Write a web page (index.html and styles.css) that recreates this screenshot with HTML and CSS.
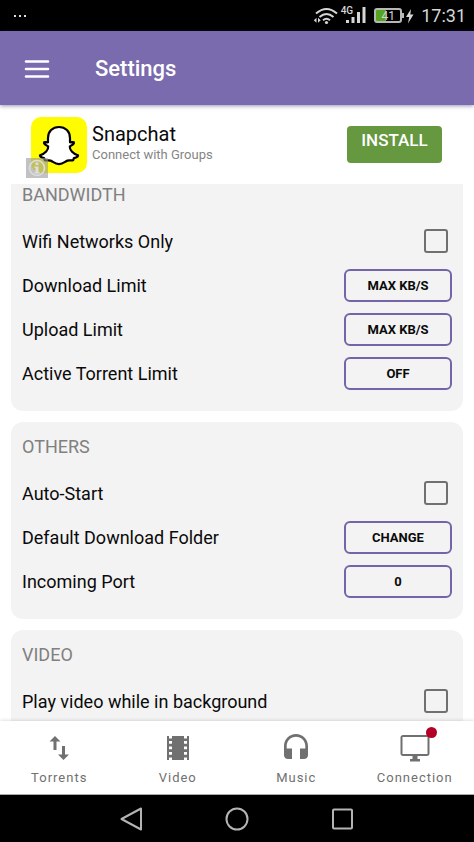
FILE: index.html
```html
<!DOCTYPE html>
<html lang="en">
<head>
<meta charset="utf-8">
<meta name="viewport" content="width=device-width, initial-scale=1">
<title>Settings</title>
<link rel="stylesheet" href="styles.css">
</head>
<body>
<div class="status">
  <svg class="dots" width="14" height="4" viewBox="0 0 14 4" fill="#ddd"><path d="M1 1h2v2H1zM6 1h2v2H6zM11 1h2v2h-2z"/></svg>
  <div class="status-right">
    <svg width="26" height="18" viewBox="0 0 26 18" fill="none" stroke="#d6d6d6" stroke-width="2">
      <path d="M3 6.500Q13.500-2.500 24 6.500M6.500 10Q13.500 4 20.500 10M10 13.200Q13.500 10.200 17 13.200"/>
      <circle cx="13.500" cy="15.500" r="1.600" fill="#d6d6d6" stroke="none"/>
      <path d="M3.500 10.800v5L.8 13.300zM5 10.800v5l2.700-2.500z" fill="#d6d6d6" stroke="none"/>
    </svg>
    <div class="signal">
      <span class="net">4G</span>
      <svg width="20" height="17" viewBox="0 0 20 17" fill="#d6d6d6"><path d="M0 13h3v3H0zM5.500 10h3v6h-3zM11 5h3v11h-3zM16.500 0h3v16h-3z"/></svg>
    </div>
    <span class="battery"><span class="level">41</span></span>
    <svg width="8" height="16" viewBox="0 0 8 16" fill="#d6d6d6"><path d="M5 1 0 9h3.200L2 15.500 7.500 6.500H4.300z"/></svg>
    <span class="clock">17:31</span>
  </div>
</div>

<header class="appbar">
  <button class="menu" aria-label="Menu"><svg width="26" height="20" viewBox="0 0 26 20" stroke="#fff" stroke-width="2.600" stroke-linecap="round"><path d="M2 2.500h22M2 10h22M2 17.500h22"/></svg></button>
  <h1>Settings</h1>
</header>

<section class="ad">
  <div class="ad-icon">
    <svg width="56" height="56" viewBox="0 0 56 56"><rect width="56" height="56" rx="10" fill="#fffb00"/><path d="M28 10c-6.500 0-11 4.500-11 11v4.200c-1.500.4-3-.6-3.800 0-.9 1.200 1 2.600 4 4.200.3 3.600-3 7.300-8 8.800-.8.700.5 2.200 3.800 2.900.5.500.3 1.700 1 2.200 1.400.5 3.400-.5 5.600.3 2.400.9 4.200 3.500 8.400 3.500s6-2.600 8.400-3.500c2.200-.8 4.200.2 5.600-.3.700-.5.500-1.700 1-2.200 3.300-.7 4.600-2.200 3.800-2.900-5-1.500-8.300-5.200-8-8.800 3-1.600 4.900-3 4-4.200-.8-.6-2.300.4-3.800 0V21c0-6.500-4.500-11-11-11z" fill="#fff" stroke="#000" stroke-width="2.200" stroke-linejoin="round"/></svg>
    <svg class="info" width="22" height="20" viewBox="0 0 22 20"><path d="M0 0h22v20H0z" fill="#999" fill-opacity=".6"/><circle cx="11" cy="10" r="7.500" fill="none" stroke="#ddd" stroke-width="1.600"/><path d="M9.500 4.500h3V7h-3zM8.500 8.500h4V14h1v1.500h-5V14h1v-4h-1z" fill="#ddd"/></svg>
  </div>
  <div class="ad-text">
    <div class="ad-title">Snapchat</div>
    <div class="ad-sub">Connect with Groups</div>
  </div>
  <button class="install">INSTALL</button>
</section>

<main class="content">
  <div class="cards">
    <section class="card">
      <h2>BANDWIDTH</h2>
      <div class="row"><label for="wifi">Wifi Networks Only</label><input type="checkbox" id="wifi"></div>
      <div class="row"><label for="down">Download Limit</label><button id="down" class="value">MAX KB/S</button></div>
      <div class="row"><label for="up">Upload Limit</label><button id="up" class="value">MAX KB/S</button></div>
      <div class="row"><label for="active">Active Torrent Limit</label><button id="active" class="value">OFF</button></div>
    </section>
    <section class="card">
      <h2>OTHERS</h2>
      <div class="row"><label for="auto">Auto-Start</label><input type="checkbox" id="auto"></div>
      <div class="row"><label for="folder">Default Download Folder</label><button id="folder" class="value">CHANGE</button></div>
      <div class="row"><label for="port">Incoming Port</label><button id="port" class="value">0</button></div>
    </section>
    <section class="card">
      <h2>VIDEO</h2>
      <div class="row"><label for="bg">Play video while in background</label><input type="checkbox" id="bg"></div>
    </section>
  </div>
</main>

<nav class="tabs">
  <a href="#torrents">
    <svg width="32" height="32" viewBox="0 0 32 32" fill="#707070"><path d="M12 4 17.500 9.500h-4V18h-3V9.500h-4zM20.500 28 15 22.500h4V14h3v8.500h4z"/></svg>
    Torrents
  </a>
  <a href="#video">
    <svg width="32" height="32" viewBox="0 0 32 32" fill="#707070"><path fill-rule="evenodd" d="M5 4h2v2.500h3V4h12v2.500h3V4h2v24h-2v-2.500h-3V28H10v-2.500H7V28H5zM7 9v2.700h3V9zM7 14.500v2.700h3v-2.700zM7 20v2.700h3V20zM22 9v2.700h3V9zM22 14.500v2.700h3v-2.700zM22 20v2.700h3V20z"/></svg>
    Video
  </a>
  <a href="#music">
    <svg width="32" height="32" viewBox="0 0 32 32" fill="#707070"><path d="M16 2C9.400 2 4 7.300 4 14v9.200C4 25.400 5.800 27 8 27h4V16.500H6.700V14c0-5.200 4.100-9.300 9.300-9.300s9.300 4.100 9.300 9.300v2.500H20V27h4c2.200 0 4-1.600 4-3.800V14C28 7.300 22.600 2 16 2z"/></svg>
    Music
  </a>
  <a href="#connection">
    <svg width="32" height="32" viewBox="0 0 32 32" fill="#707070"><path fill-rule="evenodd" d="M4 3h24c1.500 0 2.500 1 2.500 2.500v16c0 1.500-1 2.500-2.500 2.500h-9.500v3H21v2.500H11V27h2.500v-3H4c-1.500 0-2.500-1-2.500-2.500v-16C1.500 4 2.500 3 4 3zm-.5 2v17h25V5z"/></svg>
    Connection
    <span class="badge"></span>
  </a>
</nav>

<div class="sysnav">
  <button aria-label="Back"><svg width="24" height="26" viewBox="0 0 24 26" fill="none" stroke="#b4b4b4" stroke-width="2"><path d="M22 2.500v21L2.500 13z" stroke-linejoin="round"/></svg></button>
  <button aria-label="Home"><svg width="24" height="26" viewBox="0 0 24 26" fill="none" stroke="#b4b4b4" stroke-width="2"><circle cx="12" cy="13" r="10.500"/></svg></button>
  <button aria-label="Recent apps"><svg width="24" height="26" viewBox="0 0 24 26" fill="none" stroke="#b4b4b4" stroke-width="2"><rect x="2" y="3.500" width="19" height="19" rx="1"/></svg></button>
</div>
</body>
</html>
```
FILE: styles.css
```css
* { box-sizing: border-box; }

body {
  margin: 0;
  height: 100vh;
  display: flex;
  flex-direction: column;
  background: #fff;
  color: #0a0a0a;
  font-family: Roboto, sans-serif;
}

h1, h2 { margin: 0; }

button {
  margin: 0;
  padding: 0;
  border: 0;
  background: none;
  font-family: inherit;
}

svg { display: block; flex: none; }

.status {
  flex: none;
  height: 31px;
  padding: 0 8px 0 13px;
  display: flex;
  align-items: center;
  justify-content: space-between;
  background: #000;
  color: #d6d6d6;
}

.status-right { display: flex; align-items: center; }

.signal { display: flex; margin-left: 2px; }

.net {
  font-size: 10px;
  line-height: 8px;
  font-weight: 500;
  margin-right: -7px;
}

.battery {
  position: relative;
  width: 28px;
  height: 15px;
  margin: 0 4px 0 8px;
  border: 2px solid #b8b8b8;
  border-radius: 3px;
  background: linear-gradient(90deg, #56a51e 42%, #000 42%);
  text-align: center;
}

.battery::after {
  content: "";
  position: absolute;
  right: -4px;
  top: 3px;
  width: 2px;
  height: 5px;
  background: #b8b8b8;
}

.level { display: block; font-size: 12px; line-height: 12px; }

.clock { margin-left: 7px; font-size: 18px; line-height: 20px; }

.appbar {
  flex: none;
  position: relative;
  height: 74px;
  padding: 2px 24px 0;
  display: flex;
  align-items: center;
  gap: 45px;
  background: #7a6aae;
  color: #fff;
  box-shadow: 0 1px 4px rgba(60, 45, 110, .5);
}

.appbar h1 { font-size: 22px; line-height: 28px; font-weight: 500; }

.ad {
  flex: none;
  height: 79px;
  padding: 0 32px 0 31px;
  display: flex;
  align-items: center;
}

.ad-icon { position: relative; }

.info { position: absolute; left: -5px; bottom: -5px; }

.ad-text { flex: 1; padding: 0 0 4px 5px; }

.ad-title { font-size: 20px; line-height: 24px; }

.ad-sub { font-size: 13px; line-height: 18px; color: #858585; }

.install {
  width: 95px;
  height: 37px;
  padding-bottom: 9px;
  border-radius: 4px;
  background: #65983f;
  color: #fff;
  font-size: 17px;
  font-weight: 500;
}

.content { flex: 1; min-height: 0; overflow: hidden; }

/* The list is scrolled slightly past the top of its first card. */
.cards {
  margin-top: -14px;
  padding: 0 11px;
  display: flex;
  flex-direction: column;
  gap: 11px;
}

.card {
  padding: 14px 11px 16px;
  border-radius: 12px;
  background: #f3f3f3;
}

.card h2 {
  padding-bottom: 13px;
  font-size: 18px;
  line-height: 22px;
  font-weight: 400;
  color: #808080;
}

.row {
  height: 44px;
  display: flex;
  align-items: center;
  justify-content: space-between;
  font-size: 18px;
}

.row input {
  appearance: none;
  width: 24px;
  height: 24px;
  margin: 0 4px;
  border: 2px solid #707070;
  border-radius: 3px;
}

.value {
  width: 108px;
  height: 33px;
  border: 2px solid #7564a8;
  border-radius: 6px;
  color: #0a0a0a;
  font-size: 13px;
  font-weight: 700;
}

.tabs {
  flex: none;
  position: relative;
  height: 74px;
  display: grid;
  grid-template-columns: repeat(4, 1fr);
  background: #fff;
  border-bottom: 1px solid #aaa;
  box-shadow: 0 -1px 3px rgba(0, 0, 0, .12);
}

.tabs a {
  position: relative;
  padding-top: 11px;
  display: flex;
  flex-direction: column;
  align-items: center;
  gap: 6px;
  color: #707070;
  font-size: 13px;
  line-height: 16px;
  letter-spacing: 1px;
  text-decoration: none;
}

.badge {
  position: absolute;
  top: 6px;
  left: calc(50% + 11px);
  width: 11px;
  height: 11px;
  border-radius: 50%;
  background: #b30026;
}

.sysnav {
  flex: none;
  height: 47px;
  display: flex;
  align-items: center;
  justify-content: center;
  gap: 82px;
  background: #000;
}
```
